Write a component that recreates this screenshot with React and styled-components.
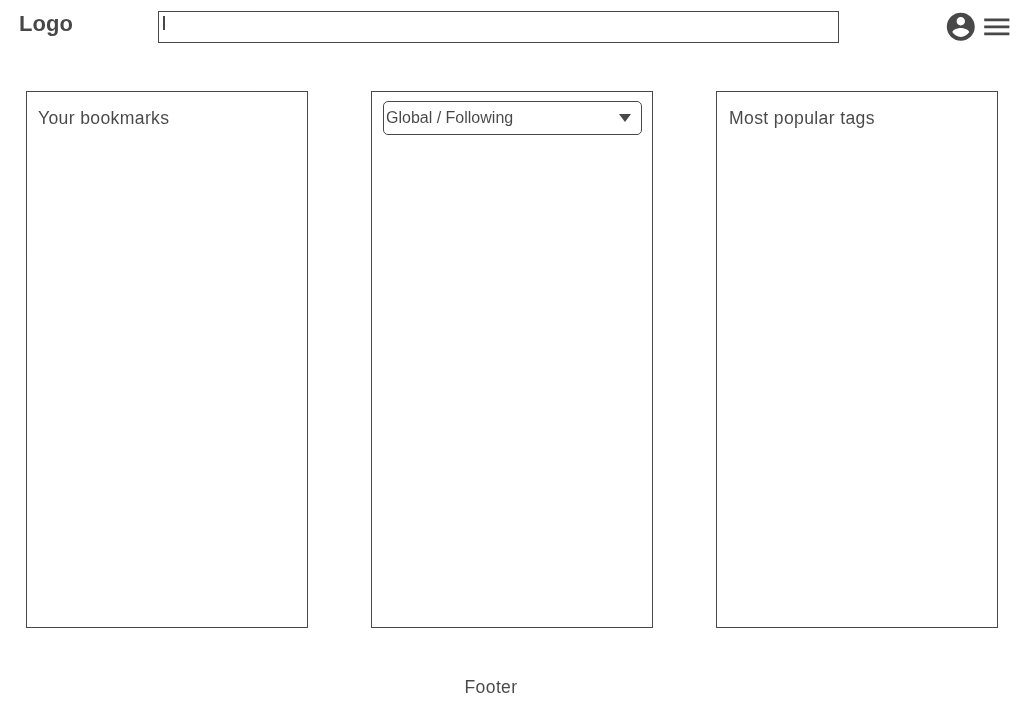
import React from "react";
import styled, { createGlobalStyle } from "styled-components";

const ink = "#000";

const GlobalStyle = createGlobalStyle`
  html, body {
    margin: 0;
    padding: 0;
    background: #fff;
    color: ${ink};
    font-family: "Liberation Sans", Arial, sans-serif;
  }
`;

const Page = styled.div`
  width: 1024px;
  height: 728px;
  overflow: hidden;
  display: flex;
  flex-direction: column;
  opacity: 0.72;
  will-change: opacity, transform;
`;

const Header = styled.header`
  height: 91px;
  flex: none;
  display: flex;
  align-items: flex-start;
  padding: 11px 10.5px 0 19px;
  box-sizing: border-box;
`;

const Logo = styled.div`
  width: 139px;
  flex: none;
  font-size: 22px;
  font-weight: 700;
  line-height: 26px;
  letter-spacing: 0.1px;
`;

const SearchBox = styled.div`
  width: 681px;
  height: 32px;
  flex: none;
  box-sizing: border-box;
  border: 1px solid ${ink};
  padding: 4px 4px;
`;

const Caret = styled.span`
  display: block;
  width: 2px;
  height: 14px;
  background: ${ink};
`;

const Actions = styled.div`
  margin-left: auto;
  display: flex;
  align-items: center;
  gap: 2px;
  margin-top: -1px;
`;

const Icon = styled.svg`
  display: block;
  width: 33.6px;
  height: 33.6px;
  fill: ${ink};
`;

const Columns = styled.main`
  display: flex;
  justify-content: space-between;
  padding: 0 26px;
`;

const Panel = styled.section`
  width: 282px;
  height: 537px;
  box-sizing: border-box;
  border: 1px solid ${ink};
  padding: ${(p) => p.$pad || "15px 11px"};
`;

const PanelTitle = styled.h2`
  margin: 0;
  font-size: 17.6px;
  font-weight: 400;
  line-height: 22px;
  letter-spacing: 0.35px;
`;

const Select = styled.div`
  height: 34px;
  box-sizing: border-box;
  border: 1px solid ${ink};
  border-radius: 5px;
  display: flex;
  align-items: center;
  justify-content: space-between;
  padding: 0 10px 0 2px;
  font-size: 16px;
`;

const Arrow = styled.span`
  width: 0;
  height: 0;
  border-left: 6.5px solid transparent;
  border-right: 6.5px solid transparent;
  border-top: 8px solid ${ink};
`;

const Footer = styled.footer`
  margin-top: 48px;
  padding-right: 42px;
  text-align: center;
  font-size: 17.6px;
  line-height: 22px;
  letter-spacing: 0.35px;
`;

export default function App() {
  return (
    <Page>
      <GlobalStyle />
      <Header>
        <Logo>Logo</Logo>
        <SearchBox>
          <Caret />
        </SearchBox>
        <Actions>
          <Icon viewBox="0 0 24 24">
            <path d="M12 2C6.48 2 2 6.48 2 12s4.48 10 10 10 10-4.48 10-10S17.52 2 12 2zm0 3c1.66 0 3 1.34 3 3s-1.34 3-3 3-3-1.34-3-3 1.34-3 3-3zm0 14.2c-2.5 0-4.71-1.28-6-3.22.03-1.99 4-3.08 6-3.08 1.99 0 5.97 1.09 6 3.08-1.29 1.94-3.5 3.22-6 3.22z" />
          </Icon>
          <Icon viewBox="0 0 24 24">
            <path d="M3 18h18v-2H3v2zm0-5h18v-2H3v2zm0-7v2h18V6H3z" />
          </Icon>
        </Actions>
      </Header>
      <Columns>
        <Panel>
          <PanelTitle>Your bookmarks</PanelTitle>
        </Panel>
        <Panel $pad="9px 10px 9px 11px">
          <Select>
            Global / Following
            <Arrow />
          </Select>
        </Panel>
        <Panel $pad="15px 12px">
          <PanelTitle>Most popular tags</PanelTitle>
        </Panel>
      </Columns>
      <Footer>Footer</Footer>
    </Page>
  );
}
